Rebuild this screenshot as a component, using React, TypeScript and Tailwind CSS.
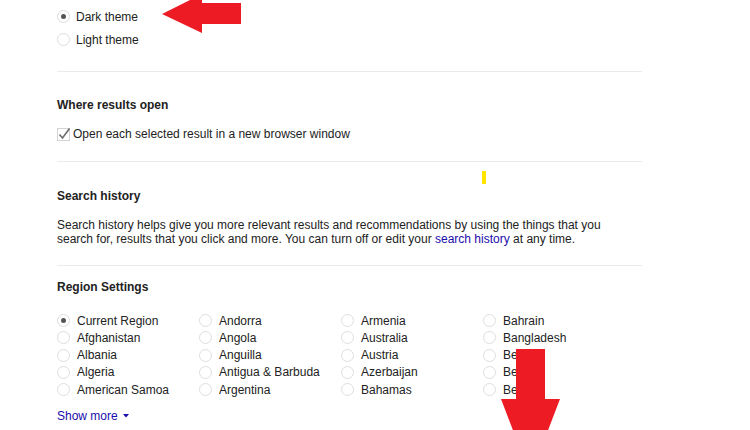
import React from 'react';

const regions = [
  ['Current Region', 'Afghanistan', 'Albania', 'Algeria', 'American Samoa'],
  ['Andorra', 'Angola', 'Anguilla', 'Antigua & Barbuda', 'Argentina'],
  ['Armenia', 'Australia', 'Austria', 'Azerbaijan', 'Bahamas'],
  ['Bahrain', 'Bangladesh', 'Be', 'Be', 'Be'],
];

function Radio({ checked = false }: { checked?: boolean }) {
  return (
    <span className="w-[13px] h-[13px] shrink-0 rounded-full border border-[#dedede] bg-white flex items-center justify-center">
      {checked && <span className="w-[5px] h-[5px] rounded-full bg-[#555]" />}
    </span>
  );
}

function Divider() {
  return <div className="h-px bg-[#ebebeb]" />;
}

export default function App() {
  return (
    <div className="relative w-[750px] h-[430px] overflow-hidden bg-white text-[12px] text-[#222] font-['Liberation_Sans',Arial,sans-serif]">
      <div className="ml-[57px] w-[585px]">
        {/* theme */}
        <div className="mt-[-18px]">
          {['Default theme', 'Dark theme', 'Light theme'].map((t, i) => (
            <div key={t} className="h-[23px] flex items-center gap-[6px]">
              <Radio checked={i === 1} />
              <span>{t}</span>
            </div>
          ))}
        </div>

        <div className="mt-[20px]">
          <Divider />
        </div>

        {/* results */}
        <h2 className="mt-[25px] leading-[16px] font-bold">Where results open</h2>
        <label className="mt-[13px] h-[16px] flex items-center gap-[2px]">
          <svg width="14" height="14" viewBox="0 0 14 14" className="shrink-0">
            <rect x="0.5" y="1.5" width="12" height="12" fill="white" stroke="#d4d4d4" />
            <polyline points="2.5,7.5 5.5,11 12.5,1.5" fill="none" stroke="#6b6b6b" strokeWidth="1.6" />
          </svg>
          <span>Open each selected result in a new browser window</span>
        </label>

        <div className="mt-[19px]">
          <Divider />
        </div>

        {/* history */}
        <h2 className="mt-[26px] leading-[16px] font-bold">Search history</h2>
        <p className="mt-[14px] max-w-[560px] leading-[14px]">
          Search history helps give you more relevant results and recommendations by using the things that you
          search for, results that you click and more. You can turn off or edit your{' '}
          <a className="text-[#1a0dab]">search history</a> at any time.
        </p>

        <div className="mt-[19px]">
          <Divider />
        </div>

        {/* region */}
        <h2 className="mt-[13px] leading-[16px] font-bold">Region Settings</h2>
        <div className="mt-[17px] grid grid-cols-[142px_142px_142px_142px]">
          {regions.map((col, c) => (
            <div key={c}>
              {col.map((name, r) => (
                <div key={r} className="h-[17.25px] flex items-center gap-[7px]">
                  <Radio checked={c === 0 && r === 0} />
                  <span className="whitespace-nowrap">{name}</span>
                </div>
              ))}
            </div>
          ))}
        </div>
        <a className="mt-[10px] h-[16px] flex items-center gap-[5px] text-[#1a0dab]">
          Show more
          <svg width="6" height="4" viewBox="0 0 6 4">
            <polygon points="0,0 6,0 3,3.5" fill="#1a0dab" />
          </svg>
        </a>
      </div>

      {/* annotation marks */}
      <div className="absolute left-[482px] top-[171px] w-[4px] h-[13px] bg-[#ffe500]" />
      <svg className="absolute left-0 top-0 pointer-events-none" width="750" height="430" viewBox="0 0 750 430">
        <polygon points="162,14 202,-6 202,3 241,3 241,24 202,24 202,33" fill="#ed1c24" />
        <polygon points="516,349 545,349 545,399 560,399 530.5,476 501,399 516,399" fill="#ed1c24" />
      </svg>
    </div>
  );
}
